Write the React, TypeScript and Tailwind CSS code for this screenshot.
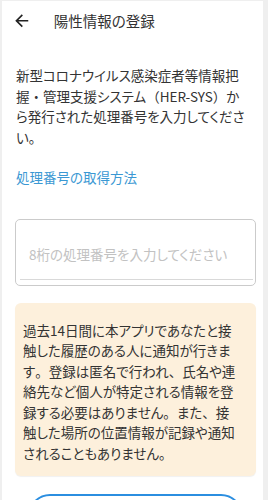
import React from "react";

const font = "font-['Noto_Sans_CJK_JP','Noto_Sans',sans-serif] [font-feature-settings:'palt']";

function T({ s }: { s: string }) {
  const parts = s.split(/([、。・（）])/);
  return (
    <>
      {parts.map((p, i) =>
        /^[、。・（）]$/.test(p) ? (
          <span key={i} className="[font-feature-settings:normal]">{p}</span>
        ) : (
          <React.Fragment key={i}>{p}</React.Fragment>
        )
      )}
    </>
  );
}

function Lines({ lines }: { lines: string[] }) {
  return (
    <>
      {lines.map((l, i) => (
        <React.Fragment key={i}>
          <T s={l} />
          {i < lines.length - 1 && <br />}
        </React.Fragment>
      ))}
    </>
  );
}

export default function App() {
  return (
    <div className={`w-[268px] h-[500px] overflow-hidden bg-[#efefef] pt-px pl-[2px] pr-[5px] ${font}`}>
      <div className="bg-white h-full">
        <div className="h-[40px] flex items-center">
          <svg width="19.5" height="19.5" viewBox="0 0 24 24" className="ml-[9.75px] text-[#222]" fill="currentColor">
            <path d="M20 11H7.83l5.59-5.59L12 4l-8 8 8 8 1.41-1.41L7.83 13H20v-2z" />
          </svg>
          <div className="ml-[22.5px] text-[14.5px] text-[#333] leading-none">陽性情報の登録</div>
        </div>
        <div className="pl-[14px] pr-[7px]">
          <p className="mt-[24px] text-[13.5px] leading-[20.5px] text-[#333] whitespace-nowrap">
            <Lines
              lines={[
                "新型コロナウイルス感染症者等情報把",
                "握・管理支援システム（HER-SYS）か",
                "ら発行された処理番号を入力してくださ",
                "い。",
              ]}
            />
          </p>
          <p className="mt-[20px] text-[13.5px] leading-[20.5px] text-[#3b98d3]">処理番号の取得方法</p>
          <div className="mt-[31px] ml-[-1px] h-[67px] rounded-[5px] border-[1.5px] border-[#cbcbcb] flex flex-col">
            <div className="flex-1 flex items-end pl-[13px] pb-[15px]">
              <span className="text-[13.5px] leading-[20px] text-[#c2c2c2] whitespace-nowrap">8桁の処理番号を入力してください</span>
            </div>
            <div className="h-px bg-[#d9d9d9] ml-[4px] mr-[2px] mb-[5px]" />
          </div>
          <div className="mt-[17px] ml-[-1px] h-[173px] rounded-[6px] bg-[#fdf0dc] shadow-[0_1px_1px_rgba(0,0,0,0.06)] pl-[8px] pt-[17px]">
            <p className="text-[13.5px] leading-[20.5px] text-[#333] whitespace-nowrap">
              <Lines
                lines={[
                  "過去14日間に本アプリであなたと接",
                  "触した履歴のある人に通知が行きま",
                  "す。登録は匿名で行われ、氏名や連",
                  "絡先など個人が特定される情報を登",
                  "録する必要はありません。また、接",
                  "触した場所の位置情報が記録や通知",
                  "されることもありません。",
                ]}
              />
            </p>
          </div>
          <div className="mt-[18px] ml-[12px] mr-[13px] h-[44px] rounded-full border-2 border-[#2b8ee0]" />
        </div>
      </div>
    </div>
  );
}
